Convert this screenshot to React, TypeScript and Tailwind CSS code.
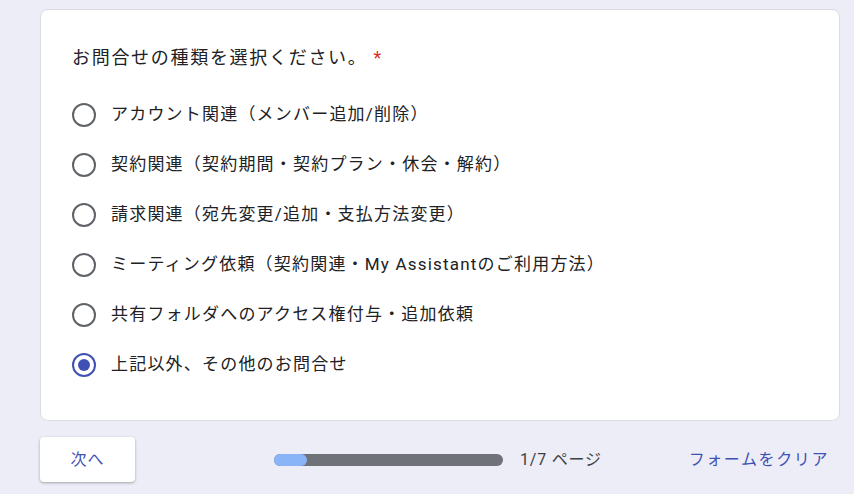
import { useState } from "react";

const options = [
  "アカウント関連（メンバー追加/削除）",
  "契約関連（契約期間・契約プラン・休会・解約）",
  "請求関連（宛先変更/追加・支払方法変更）",
  "ミーティング依頼（契約関連・My Assistantのご利用方法）",
  "共有フォルダへのアクセス権付与・追加依頼",
  "上記以外、その他のお問合せ",
];

function Radio({ checked }: { checked: boolean }) {
  return (
    <span
      className={
        "flex h-6 w-6 shrink-0 items-center justify-center rounded-full border-2 " +
        (checked ? "border-[#3f51b5]" : "border-[#5f6368]")
      }
    >
      {checked && <span className="h-3 w-3 rounded-full bg-[#3f51b5]" />}
    </span>
  );
}

export default function App() {
  const [selected, setSelected] = useState(5);
  return (
    <div
      className="min-h-[494px] w-[854px] bg-[#ecedf7] pl-10 pt-[9px] text-[#202124]"
      style={{ fontFamily: "Roboto, 'Noto Sans CJK JP', sans-serif" }}
    >
      <div className="w-[800px] rounded-lg border border-[#dadce0] bg-white pb-[30px] pl-[31px] pt-9">
        <h2 className="text-[18px] leading-6 tracking-[1.7px]">
          お問合せの種類を選択ください。
          <span className="ml-[6px] text-[#d93025]">*</span>
        </h2>
        <div className="mt-5 flex flex-col">
          {options.map((o, i) => (
            <label
              key={o}
              className="flex h-[50px] cursor-pointer items-center gap-[15px]"
              onClick={() => setSelected(i)}
            >
              <Radio checked={selected === i} />
              <span className="text-[17px] tracking-[1.2px]">{o}</span>
            </label>
          ))}
        </div>
      </div>

      <div className="mt-4 flex items-center pr-[25px]">
        <button className="h-[45px] w-[95px] rounded-[4px] bg-white text-[16px] tracking-[1px] text-[#3f51b5] shadow-[0_1px_3px_rgba(60,64,67,0.3),0_1px_2px_rgba(60,64,67,0.15)]">
          次へ
        </button>
        <div className="ml-[139px] flex items-center">
          <div className="h-3 w-[229px] rounded-full bg-[#6f7278]">
            <div className="h-3 w-[33px] rounded-full bg-[#8ab4f8]" />
          </div>
          <span className="ml-[17px] text-[16px] tracking-[0.8px] text-[#3c4043]">1/7 ページ</span>
        </div>
        <button className="ml-auto text-[16px] tracking-[1.6px] text-[#3f51b5]">フォームをクリア</button>
      </div>
    </div>
  );
}
